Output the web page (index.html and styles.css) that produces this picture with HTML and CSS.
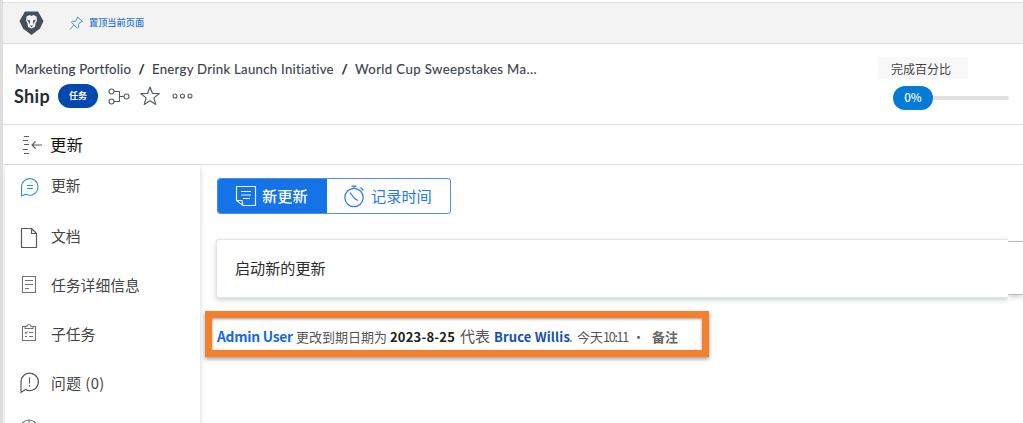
FILE: index.html
```html
<!DOCTYPE html>
<html lang="zh-CN">
<head>
<meta charset="utf-8">
<title>Ship</title>
<link rel="stylesheet" href="styles.css">
</head>
<body>
<div class="page">
  <header class="topbar">
    <svg class="logo" width="25" height="26" viewBox="0 0 25 26"><path d="M6 1.500h13L24.500 11 21 18.500l-8.500 6.500L4 18.500.500 11z" fill="#454e5b"/><path d="M7.500 6.500l3-1.500 2 1 2-1 3 1.500.5 4-1.500 3-.5 3.500-3.500 1.500L9 17l-.5-3.500-1.500-3z" fill="#f3f3f3"/><path d="M8 9.500l3 1-.4 4-1.100-2.500zM17 9.500l-3 1 .4 4 1.100-2.500zM10.800 15.500h3.400l-1.700 1.700z" fill="#454e5b"/></svg>
    <svg class="pin" width="15" height="15" viewBox="0 0 15 15"><path d="M8.500 1l5 4.500-2 .5-2 2.500.2 3-1.400.8L2.500 6.500l.8-1.300 3 .2L8 3zM4.800 9.200L1 13.500" fill="none" stroke="#3f8fdf" stroke-linejoin="round"/></svg>
    <span class="pin-label">置顶当前页面</span>
  </header>
  <section class="header">
    <div class="info">
      <nav class="crumbs"><span class="c1">Marketing Portfolio</span><b class="slash">/</b><span class="c2">Energy Drink Launch Initiative</span><b class="slash">/</b><span class="c3">World Cup Sweepstakes Ma...</span></nav>
      <div class="title-row">
        <h1>Ship</h1><span class="badge">任务</span>
        <svg class="flow" width="22" height="17" viewBox="0 0 22 17" fill="none" stroke="#555d69" stroke-width="1.100"><circle cx="3.500" cy="3.500" r="2.500"/><circle cx="3.500" cy="13.500" r="2.500"/><circle cx="18.500" cy="8.500" r="2.500"/><path d="M6 3.500h5.500v10H6M11.500 8.500H16"/></svg>
        <svg class="star" width="20" height="20" viewBox="0 0 20 20"><path d="M10 1l2.400 6.300 6.900.3-5.400 4.300 1.900 6.700-5.800-3.800-5.800 3.800 1.900-6.700L.7 7.600l6.900-.3z" fill="none" stroke="#555d69" stroke-width="1.200" stroke-linejoin="round"/></svg>
        <svg class="dots" width="22" height="6" viewBox="0 0 22 6" fill="none" stroke="#555d69" stroke-width="1.100"><circle cx="3" cy="3" r="2"/><circle cx="10.500" cy="3" r="2"/><circle cx="18" cy="3" r="2"/></svg>
      </div>
    </div>
    <div class="progress">
      <div class="progress-label">完成百分比</div>
      <div class="meter"><span class="percent">0%</span><span class="track"></span></div>
    </div>
  </section>
  <div class="section-title">
    <svg width="20" height="20" viewBox="0 0 20 20" fill="none" stroke="#555d69" stroke-width="1.100"><path d="M1 1.500h5M0 5.500h5M1 9.500h5M0 14.500h5M1 18.500h5M9 10h10M12.500 6.500L9 10l3.500 3.500"/></svg>
    <span>更新</span>
  </div>
  <div class="body">
    <aside class="sidebar">
      <div class="item"><svg width="20" height="20" viewBox="0 0 20 20" fill="none" stroke="#2e8fdf" stroke-width="1.100"><path d="M1.500 19V10a8.300 8.300 0 1 1 4.300 7.200zM7 8.500h6M7 11.500h6"/></svg><span>更新</span></div>
      <div class="item docs"><svg width="20" height="22" viewBox="0 0 20 22" fill="none" stroke="#555a61" stroke-width="1.200" stroke-linejoin="round"><path d="M1.500 1.500h10l5 5v14h-15zM11.500 1.500v5h5"/></svg><span>文档</span></div>
      <div class="item"><svg width="20" height="20" viewBox="0 0 20 20" fill="none" stroke="#70757c" stroke-width="1.100"><path d="M2.500 1.500h13v16h-13zM5 5.500h8M5 9.500h8M5 13.500h4"/></svg><span>任务详细信息</span></div>
      <div class="item"><svg class="subtasks" width="20" height="20" viewBox="0 0 20 20" fill="none" stroke="#70757c" stroke-width="1.100"><path d="M5 3.500H2.500v14h13v-14H13M5 5.500v-2h2a2 2 0 0 1 4 0h2v2zM5 9.500l1 1 1.500-2M9 9.500h4M5 13.500h2M9 13.500h4"/></svg><span>子任务</span></div>
      <div class="item"><svg class="issue" width="20" height="22" viewBox="0 0 20 22" fill="none" stroke="#555a61" stroke-width="1.200"><path d="M1 20.500L1 10a8.700 8.700 0 1 1 4.500 7.500zM9.500 5.500v6M9.500 13v1.500"/></svg><span class="issues">问题 (0)</span></div>
      <div class="item last"><svg width="20" height="20" viewBox="0 0 20 20" fill="none" stroke="#70757c" stroke-width="1.100"><circle cx="9" cy="9.500" r="8.500"/><path d="M9 1v8l6 4"/></svg></div>
    </aside>
    <main class="content">
      <div class="tabs">
        <div class="tab active"><svg width="22" height="22" viewBox="0 0 22 22" fill="none" stroke="#e9f3ff" stroke-width="1.200"><path d="M1.500 1.500h19v19H8l-6.500-5zM1.500 15.500H7L8 20.500M6 6.500h10M6 10h10M8 13.500h7"/></svg><span>新更新</span></div>
        <div class="tab log"><svg width="22" height="23" viewBox="0 0 22 23" fill="none" stroke="#2b7be3" stroke-width="1.200"><circle cx="11" cy="12.500" r="9.200"/><path d="M8.500 1.200h5M11 1v2M17.500 2.500l3 3M7 7.500l4.500 6 3.500 2"/></svg><span>记录时间</span></div>
      </div>
      <div class="composer"><div class="composer-main">启动新的更新</div><div class="composer-edge"></div></div>
      <div class="activity"><b class="user">Admin User</b><span class="action">更改到期日期为</span><b class="date">2023-8-25</b><span class="behalf">代表</span><b class="bruce">Bruce Willis</b><span class="stop">.</span><span class="time">今天<span class="clock">10:11</span></span><span class="bullet">•</span><b class="note">备注</b></div>
    </main>
  </div>
</div>
</body>
</html>
```
FILE: styles.css
```css
* { box-sizing: border-box; }
body { margin: 0; background: #fff; color: #2c2c2c; font-family: "Noto Sans CJK SC", sans-serif; }
svg { flex: none; display: block; }
.page { height: 423px; overflow: hidden; border-left: 3px solid #dedede; padding-top: 2px; white-space: nowrap; }
.topbar { height: 42px; background: #f3f3f3; border-top: 1px solid #e1e1e1; border-bottom: 1px solid #dedede; display: flex; align-items: center; padding-left: 16px; }
.pin { margin-left: 25px; }
.pin-label { margin: -2px 0 0 5px; font-size: 9.200px; font-weight: 500; color: #2878d0; }
.header { height: 81px; border-bottom: 1px solid #dedede; display: flex; justify-content: space-between; }
.info { padding: 15px 0 0 12px; }
.crumbs { display: flex; height: 20px; line-height: 20px; font-family: Lato, sans-serif; font-size: 13.200px; color: #3a424f; -webkit-text-stroke: .15px #3a424f; }
.crumbs span { flex: none; }
.c1 { width: 116px; letter-spacing: .2px; }
.c2 { width: 182px; letter-spacing: .28px; }
.c3 { width: 184px; letter-spacing: .38px; }
.slash { width: 21px; text-align: center; color: #222; font-weight: 700; }
.title-row { display: flex; align-items: center; height: 26px; margin-top: 4px; }
h1 { margin: 0 0 0 -1px; width: 44px; font: 700 18px/26px Lato, sans-serif; letter-spacing: .35px; color: #252b35; }
.badge { width: 40px; height: 24px; border-radius: 12px; background: #0348ae; color: #fff; font-size: 9px; font-weight: 700; line-height: 23px; text-align: center; }
.flow { margin-left: 10px; }
.star { margin-left: 10px; }
.dots { margin-left: 12px; }
.progress { width: 145px; padding-top: 13px; }
.progress-label { width: 90px; height: 22px; background: #f9f9f9; padding-left: 13px; font-size: 12px; line-height: 23px; color: #444; }
.meter { display: flex; align-items: center; margin: 7px 0 0 15px; }
.percent { width: 40px; height: 24px; border-radius: 12px; background: #047bd6; color: #fff; font: 500 11.500px/23px "Noto Sans CJK SC", sans-serif; text-align: center; }
.track { width: 76px; height: 4px; background: #e1e1e1; border-radius: 0 2px 2px 0; }
.section-title { height: 40px; border-bottom: 1px solid #dedede; display: flex; align-items: center; padding-left: 20px; gap: 7px; font-size: 16.400px; color: #111; }
.section-title span { margin-top: -2px; }
.body { display: flex; height: 258px; }
.sidebar { flex: none; width: 195px; margin-left: 2px; padding: 2px 0 0 15px; box-shadow: 0 2px 5px rgba(60, 70, 100, .25); font-size: 14.800px; color: #444; }
.item { display: flex; align-items: center; height: 49px; gap: 11px; padding-bottom: 9px; }
.item span { margin-top: -2px; }
.item:first-child span { margin-top: -5px; }
.docs svg { margin-top: 4px; }
.subtasks { margin-top: -2px; }
.issue { margin-top: -1px; }
.issues { letter-spacing: .45px; }
.last { margin-top: -3px; }
.content { padding: 13px 0 0 16px; width: 823px; }
.tabs { display: flex; width: 234px; height: 36px; margin-left: .5px; border: 1px solid #4b91ea; border-radius: 3px; overflow: hidden; }
.tab { display: flex; align-items: center; font-size: 15.200px; color: #2878df; }
.tab span { margin-top: -2px; }
.active { background: #1473e6; color: #fff; width: 108px; padding-left: 17px; gap: 5.500px; font-weight: 500; }
.log { padding-left: 16px; gap: 6.500px; border-left: 1px solid #1473e6; }
.composer { display: flex; margin-top: 25px; width: 807px; height: 59px; }
.composer-main { width: 792px; border: 1px solid #e1e3e5; border-right: 0; box-shadow: 0 2px 5px rgba(50, 70, 90, .24); clip-path: inset(-4px 0 -12px -7px); font-size: 15.100px; line-height: 54px; padding-left: 18px; border-radius: 3px 0 0 3px; }
.composer-edge { width: 15px; height: 54px; margin-top: 2px; border: solid #b9bbbd; border-width: 1px 0; box-shadow: 0 2px 5px rgba(50, 70, 90, .24); clip-path: inset(-1px 0 -12px 0); }
.activity { display: flex; align-items: baseline; margin: 13px 0 0 -11px; width: 504px; height: 46px; border: 7px solid #f2812f; padding-left: 5px; font-size: 13px; line-height: 35px; color: #555; box-shadow: 0 2px 4px rgba(0, 0, 0, .4), inset 0 1px 3px rgba(0, 0, 0, .4); }
.activity > * { flex: none; }
.user { width: 79px; color: #1668e3; font-size: 13.800px; letter-spacing: -.25px; }
.action { width: 94px; }
.date { width: 70px; color: #222; letter-spacing: .2px; }
.behalf { width: 34px; font-size: 15px; }
.bruce { width: 75px; color: #164fb0; letter-spacing: .15px; }
.stop { width: 8px; }
.time { width: 55px; }
.clock { font-size: 12.600px; letter-spacing: -1.300px; }
.bullet { width: 20px; }
.note { color: #666; }
```
